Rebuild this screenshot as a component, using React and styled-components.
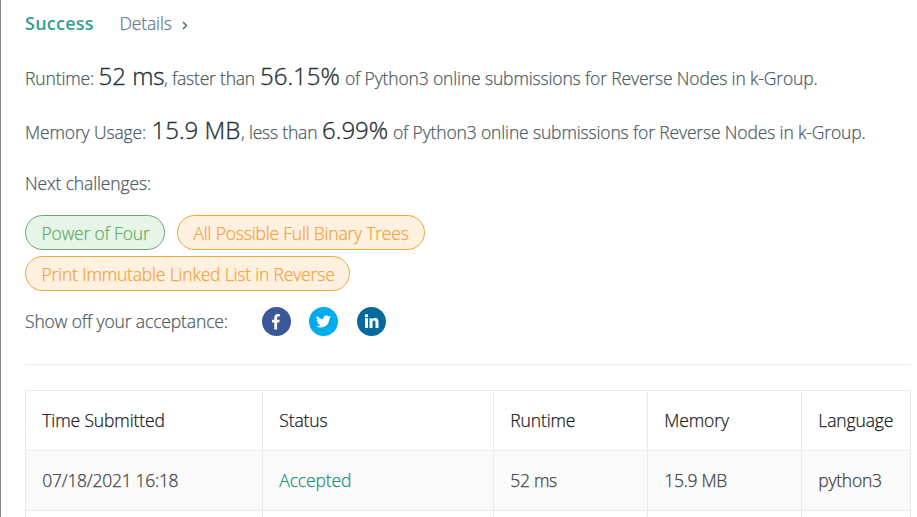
import React from "react";
import styled, { createGlobalStyle } from "styled-components";

const Global = createGlobalStyle`
  * { box-sizing: border-box; }
  body { margin: 0; background: #fff; overflow: hidden; }
`;

const Panel = styled.main`
  width: 917px;
  height: 517px;
  overflow: hidden;
  padding: 8px 6px 0 24px;
  border-left: 1px solid #868686;
  background: #fff;
  color: #4f5d64;
  font-family: "Open Sans", "Noto Sans", sans-serif;
  font-size: 17.5px;
  font-weight: 300;
  -webkit-text-stroke: 0.25px currentColor;
`;

const Run = styled.span`
  flex: none;
  width: ${(p) => p.$w}px;
  letter-spacing: ${(p) => p.$ls ?? -0.13}px;
  white-space: pre;
`;

const Header = styled.header`
  display: flex;
  height: 31px;
  line-height: 31px;
`;

const Success = styled(Run)`
  color: #35a08f;
  font-size: 18px;
  font-weight: 600;
  -webkit-text-stroke: 0;
`;

const Details = styled(Run)`
  color: #607d8b;
`;

const Chevron = styled.svg`
  align-self: center;
  margin-top: 3px;
`;

const Result = styled.p`
  display: flex;
  align-items: baseline;
  height: 54px;
  margin: 0;
  line-height: 54px;
`;

const Results = styled.section`
  margin-top: 10px;
`;

const Figure = styled(Run)`
  color: #263238;
  font-size: 24px;
  -webkit-text-stroke-width: 0.35px;
`;

const Label = styled.div`
  display: flex;
  height: 30px;
  margin-top: 12px;
  line-height: 28px;
`;

const Pills = styled.div`
  display: flex;
  flex-wrap: wrap;
  gap: 6px 12px;
  width: 460px;
  margin-top: 16px;
`;

const tones = {
  easy: { fg: "#66ab6a", line: "#66ab6a", bg: "#e6f5e7" },
  medium: { fg: "#f4a340", line: "#f0a63a", bg: "#fff1df" },
};

const Pill = styled.a`
  display: flex;
  width: ${(p) => p.$w}px;
  height: 35px;
  padding-left: 15.5px;
  border: 1px solid ${(p) => tones[p.$tone].line};
  border-radius: 18px;
  background: ${(p) => tones[p.$tone].bg};
  color: ${(p) => tones[p.$tone].fg};
  line-height: 35px;
`;

const Share = styled.div`
  display: flex;
  align-items: center;
  height: 30px;
  margin-top: 15px;
`;

const Social = styled.a`
  display: flex;
  align-items: center;
  justify-content: center;
  width: 29px;
  height: 29px;
  margin-right: ${(p) => p.$gap || 0}px;
  border-radius: 50%;
  background: ${(p) => p.$bg};
`;

const Rule = styled.hr`
  height: 1px;
  margin: 28px 0 25px;
  border: 0;
  background: #ebebeb;
`;

const Table = styled.div`
  display: grid;
  grid-template-columns: 237px 231px 154px 154px 109px;
  width: 886px;
  border-top: 1px solid #ebebeb;
  border-right: 1px solid #ebebeb;
`;

const Cell = styled.div`
  height: 60px;
  padding-left: 16.3px;
  border-left: 1px solid #ebebeb;
  border-bottom: 1px solid #ebebeb;
  background: ${(p) => (p.$shade ? "#fafafa" : "#fff")};
  color: ${(p) => p.$color || "#424242"};
  line-height: 58px;
`;

const HeadCell = styled(Cell)`
  color: #212121;
`;

export default function App() {
  return (
    <>
      <Global />
      <Panel>
        <Header>
          <Success $w={94.5} $ls={0.25}>Success</Success>
          <Details $w={62.5}>Details</Details>
          <Chevron width="6" height="9" viewBox="0 0 6 9" fill="none" stroke="#546e7a" strokeWidth="1.5">
            <path d="M1 1L4.5 4.5L1 8" />
          </Chevron>
        </Header>
        <Results>
          <Result>
            <Run $w={73.5}>Runtime:</Run>
            <Figure $w={65.5} $ls={0}>52 ms</Figure>
            <Run $w={96} $ls={-0.2}>, faster than</Run>
            <Figure $w={85} $ls={0}>56.15%</Figure>
            <Run $w={480} $ls={-0.15}>of Python3 online submissions for Reverse Nodes in k-Group.</Run>
          </Result>
          <Result>
            <Run $w={126.5}>Memory Usage:</Run>
            <Figure $w={89.5} $ls={0}>15.9 MB</Figure>
            <Run $w={81} $ls={-0.2}>, less than</Run>
            <Figure $w={71} $ls={0}>6.99%</Figure>
            <Run $w={480} $ls={-0.15}>of Python3 online submissions for Reverse Nodes in k-Group.</Run>
          </Result>
        </Results>
        <Label><Run $w={130}>Next challenges:</Run></Label>
        <Pills>
          <Pill $w={140} $tone="easy"><Run $ls={-0.18}>Power of Four</Run></Pill>
          <Pill $w={248} $tone="medium"><Run $ls={-0.2}>All Possible Full Binary Trees</Run></Pill>
          <Pill $w={325} $tone="medium"><Run $ls={-0.18}>Print Immutable Linked List in Reverse</Run></Pill>
        </Pills>
        <Share>
          <Run $w={237}>Show off your acceptance:</Run>
          <Social $bg="#3b5998" $gap={18}>
            <svg width="29" height="29" viewBox="0 0 29 29" fill="#fff">
              <path d="M12.3 22.6v-7.2H10v-2.7h2.3v-2c0-2.4 1.4-3.7 3.5-3.7 1 0 2 .1 2 .1v2.4h-1.2c-1.1 0-1.5.7-1.5 1.4v1.8h2.6l-.5 2.7h-2.1v7.2z" />
            </svg>
          </Social>
          <Social $bg="#00aced" $gap={19}>
            <svg width="15" height="15" viewBox="0 0 24 24" fill="#fff">
              <path d="M23.95 4.57a10 10 0 0 1-2.82.77 4.96 4.96 0 0 0 2.16-2.72c-.95.55-2 .95-3.13 1.18a4.92 4.92 0 0 0-8.38 4.48C7.69 8.1 4.07 6.13 1.64 3.16a4.92 4.92 0 0 0 1.52 6.57 4.9 4.9 0 0 1-2.23-.61v.06c0 2.38 1.7 4.37 3.95 4.82a5 5 0 0 1-2.21.09 4.94 4.94 0 0 0 4.6 3.42A9.87 9.87 0 0 1 0 19.54a13.94 13.94 0 0 0 7.55 2.21c9.05 0 14-7.5 14-13.98 0-.21 0-.42-.02-.63a9.94 9.94 0 0 0 2.42-2.57z" />
            </svg>
          </Social>
          <Social $bg="#046a9c">
            <svg width="29" height="29" viewBox="0 0 29 29" fill="#fff">
              <circle cx="9.5" cy="8.7" r="1.7" />
              <path d="M8 11.3h3v9.7H8zM12.5 11.3h2.8V12.6c.5-.9 1.5-1.6 2.9-1.6 2.6 0 3.3 1.8 3.3 4.4V21h-3v-5c0-1.2-.1-2.4-1.5-2.4s-1.5 1.2-1.5 2.4v5h-3z" />
            </svg>
          </Social>
        </Share>
        <Rule />
        <Table>
          <HeadCell><Run>Time Submitted</Run></HeadCell>
          <HeadCell><Run>Status</Run></HeadCell>
          <HeadCell><Run>Runtime</Run></HeadCell>
          <HeadCell><Run>Memory</Run></HeadCell>
          <HeadCell><Run>Language</Run></HeadCell>
          <Cell $shade><Run $ls={-0.28}>07/18/2021 16:18</Run></Cell>
          <Cell $shade $color="#1b9080"><Run>Accepted</Run></Cell>
          <Cell $shade><Run $ls={-0.3}>52 ms</Run></Cell>
          <Cell $shade><Run $ls={-0.3}>15.9 MB</Run></Cell>
          <Cell $shade><Run $ls={-0.25}>python3</Run></Cell>
          <Cell /><Cell /><Cell /><Cell /><Cell />
        </Table>
      </Panel>
    </>
  );
}
